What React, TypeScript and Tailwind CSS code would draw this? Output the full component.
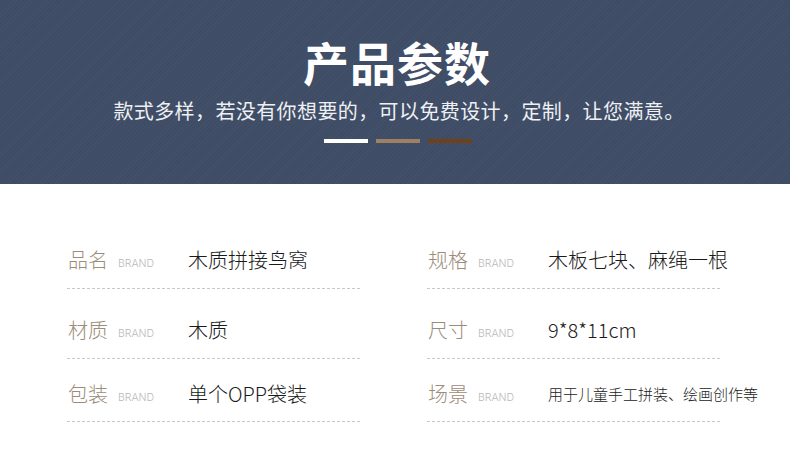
import React from "react";

const font = { fontFamily: '"Noto Sans CJK SC", "Noto Sans", sans-serif' };

type Item = { label: string; value: string; small?: boolean };

function Cell({ item }: { item: Item }) {
  return (
    <div className="flex items-center h-[28px] whitespace-nowrap">
      <span className="shrink-0 w-[51px] pl-[1px] text-[20px] leading-[28px] text-[#9c8c79] font-light">{item.label}</span>
      <span
        className="shrink-0 w-[70px] text-[10.5px] leading-[28px] pt-[8px] text-[#b9b9b9] font-light"
        style={{ fontFamily: '"Inter", "Liberation Sans", sans-serif' }}
      >
        BRAND
      </span>
      <span
        className={
          item.small
            ? "shrink-0 text-[15px] leading-[28px] text-[#222] font-light"
            : "shrink-0 text-[20px] leading-[28px] text-[#1a1a1a] font-light"
        }
      >
        {item.value}
      </span>
    </div>
  );
}

function Row({ left, right, mt, pb }: { left: Item; right: Item; mt: string; pb: string }) {
  return (
    <div className={`grid grid-cols-[293px_293px] gap-x-[67px] ${mt}`}>
      <div className={`border-b border-dashed border-[#c8c8c8] ${pb}`}>
        <Cell item={left} />
      </div>
      <div className={`border-b border-dashed border-[#c8c8c8] ${pb}`}>
        <Cell item={right} />
      </div>
    </div>
  );
}

export default function App() {
  return (
    <div className="w-[790px] h-[466px] bg-white overflow-hidden" style={font}>
      <div className="h-[184px] bg-[#3e4c65] bg-[repeating-linear-gradient(135deg,rgba(255,255,255,0.025)_0px,rgba(255,255,255,0.025)_1px,transparent_1px,transparent_3px)] flex flex-col items-center pt-[38px]">
        <div className="text-[46px] leading-[46px] font-bold text-white tracking-[1px] pl-[4px]">产品参数</div>
        <div className="mt-[14px] text-[20px] leading-[26px] tracking-[0.4px] text-[#eef0f3] pl-[8px]">
          款式多样，若没有你想要的，可以免费设计，定制，让您满意。
        </div>
        <div className="mt-[15px] flex gap-[8px] pl-[6px]">
          <div className="w-[44px] h-[4px] bg-white" />
          <div className="w-[44px] h-[4px] bg-[#a08062]" />
          <div className="w-[44px] h-[4px] bg-[#6e4118]" />
        </div>
      </div>
      <div className="pl-[67px]">
        <Row
          mt="mt-[62px]"
          pb="pb-[14px]"
          left={{ label: "品名", value: "木质拼接鸟窝" }}
          right={{ label: "规格", value: "木板七块、麻绳一根" }}
        />
        <Row
          mt="mt-[27px]"
          pb="pb-[14px]"
          left={{ label: "材质", value: "木质" }}
          right={{ label: "尺寸", value: "9*8*11cm" }}
        />
        <Row
          mt="mt-[21px]"
          pb="pb-[13px]"
          left={{ label: "包装", value: "单个OPP袋装" }}
          right={{ label: "场景", value: "用于儿童手工拼装、绘画创作等", small: true }}
        />
      </div>
    </div>
  );
}
